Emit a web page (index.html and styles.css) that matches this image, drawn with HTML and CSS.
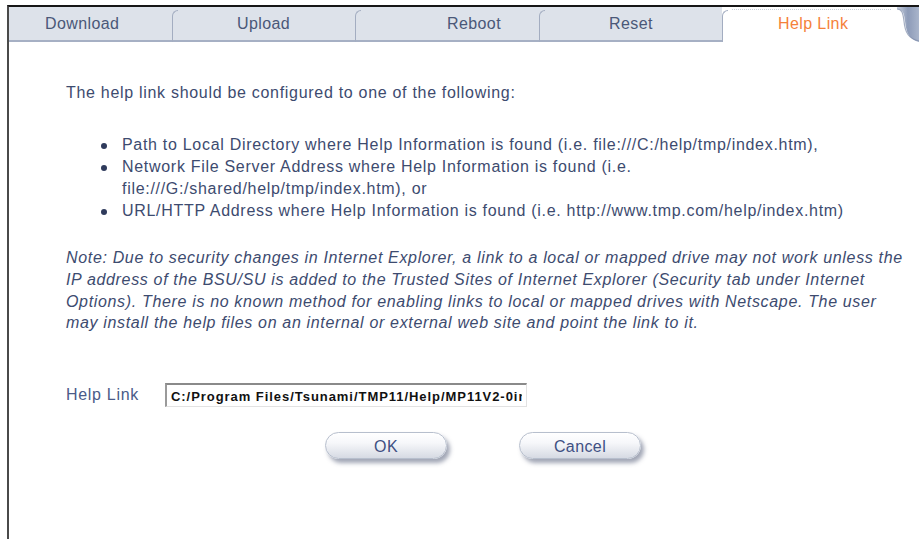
FILE: index.html
```html
<!DOCTYPE html>
<html lang="en">
<head>
<meta charset="utf-8">
<title>Help Link</title>
<link rel="stylesheet" href="styles.css">
</head>
<body>
<div class="frame">
  <nav class="tabs">
    <a class="tab tab--download">Download</a>
    <a class="tab tab--upload">Upload</a>
    <a class="tab tab--reboot">Reboot</a>
    <a class="tab tab--reset">Reset</a>
    <a class="tab tab--help is-active">Help Link</a>
    <span class="tabs__curl">
      <svg width="22" height="35" viewBox="0 0 22 35">
        <defs>
          <linearGradient id="curlFill" x1="0" y1="0" x2="1" y2="0">
            <stop offset="0" stop-color="#c9d1df"/>
            <stop offset="0.5" stop-color="#8d9bb8"/>
            <stop offset="1" stop-color="#a9b5cb"/>
          </linearGradient>
        </defs>
        <path d="M0 2 C6 2 7 6 8 14 C9 26 13 33 22 35 L22 0 L0 0 Z" fill="url(#curlFill)"/>
        <path d="M0 2 C5 2 6 6 7 14 C8 26 12 32 22 34" fill="none" stroke="#7c8aa8" stroke-width="1.2" opacity="0.7"/>
      </svg>
    </span>
  </nav>

  <main class="content">
    <p class="intro">The help link should be configured to one of the following:</p>
    <ul class="options">
      <li>Path to Local Directory where Help Information is found (i.e. file:///C:/help/tmp/index.htm),</li>
      <li>Network File Server Address where Help Information is found (i.e.<br>file:///G:/shared/help/tmp/index.htm), or</li>
      <li>URL/HTTP Address where Help Information is found (i.e. http://www.tmp.com/help/index.htm)</li>
    </ul>
    <p class="note">Note: Due to security changes in Internet Explorer, a link to a local or mapped drive may not work unless the<br>IP address of the BSU/SU is added to the Trusted Sites of Internet Explorer (Security tab under Internet<br>Options). There is no known method for enabling links to local or mapped drives with Netscape. The user<br>may install the help files on an internal or external web site and point the link to it.</p>

    <form class="form">
      <div class="field">
        <label class="field__label" for="helpLink">Help Link</label>
        <input class="field__input" id="helpLink" type="text" value="C:/Program Files/Tsunami/TMP11/Help/MP11V2-0index.htm">
      </div>
      <div class="actions">
        <button type="button" class="pill">OK</button>
        <button type="button" class="pill">Cancel</button>
      </div>
    </form>
  </main>
</div>
</body>
</html>
```

FILE: styles.css
```css
html, body {
  margin: 0;
  padding: 0;
  background: #ffffff;
}

body {
  font-family: "Liberation Sans", Arial, sans-serif;
  color: #3d4b6f;
}

.frame {
  margin: 5px 0 0 7px;
  border-top: 2px solid #161616;
  border-left: 2px solid #4a4a4a;
  height: 534px;
  box-sizing: border-box;
}

/* tab strip */
.tabs {
  display: flex;
  height: 35px;
}

.tab {
  position: relative;
  box-sizing: border-box;
  height: 35px;
  background: #dde2ea;
  border-bottom: 2px solid #a6b0c4;
  font-size: 16px;
  letter-spacing: 0.4px;
  line-height: 33px;
  color: #4a5878;
  white-space: nowrap;
}

/* curved divider at the left of each tab */
.tab + .tab::before {
  content: "";
  position: absolute;
  left: 0;
  top: 3px;
  bottom: -2px;
  width: 5px;
  border-left: 1px solid #a3adc1;
  border-top: 1px solid #a3adc1;
  border-top-left-radius: 7px;
}

.tab--download { width: 163px; padding-left: 36px; }
.tab--upload   { width: 183px; padding-left: 65px; }
.tab--reboot   { width: 184px; padding-left: 92px; }
.tab--reset    { width: 183px; padding-left: 70px; }
.tab--help     { width: 175px; padding-left: 56px; }

.tab.is-active {
  background: #ffffff;
  border-bottom-color: #ffffff;
  color: #f5813a;
}

.tab.is-active::after {
  content: "";
  position: absolute;
  left: 10px;
  right: 6px;
  top: 2px;
  border-top: 1px dotted #c9cfda;
}

.tabs__curl {
  width: 22px;
  height: 35px;
  display: block;
}

.tabs__curl svg {
  display: block;
  filter: blur(0.6px);
}

/* body copy */
.content {
  padding: 40px 0 0 57px;
  font-size: 16px;
  letter-spacing: 0.7px;
  line-height: 22px;
}

.intro {
  margin: 0;
}

.options {
  margin: 30px 0 0 0;
  padding: 0 0 0 56px;
  list-style: none;
}

.options li {
  position: relative;
}

.options li::before {
  content: "";
  position: absolute;
  left: -21px;
  top: 9px;
  width: 6px;
  height: 6px;
  border-radius: 50%;
  background: #2f3b5c;
}

.note {
  margin: 25px 0 0 0;
  font-style: italic;
  line-height: 21.8px;
  white-space: nowrap;
  letter-spacing: 0.66px;
}

/* form */
.form {
  margin: 49px 0 0 0;
}

.field {
  display: flex;
  align-items: center;
  height: 24px;
}

.field__label {
  width: 99px;
  color: #4a5b88;
  font-size: 16px;
  letter-spacing: 0.7px;
}

.field__input {
  box-sizing: border-box;
  width: 362px;
  height: 24px;
  margin: 0;
  padding: 1px 4px 0;
  border-style: solid;
  border-width: 2px 1px 1px 2px;
  border-color: #8a8a8a #e2e2e2 #e2e2e2 #9a9a9a;
  font-family: "Liberation Sans", Arial, sans-serif;
  font-weight: bold;
  font-size: 13px;
  letter-spacing: 0.95px;
  color: #111111;
  background: #ffffff;
  outline: none;
}

.actions {
  display: flex;
  gap: 72px;
  margin-top: 25px;
  padding-left: 259px;
}

.pill {
  width: 122px;
  height: 27px;
  border-radius: 14px;
  border: 1px solid #b7bfcd;
  background: linear-gradient(#ffffff 0%, #f6f7fa 40%, #d6dae3 100%);
  box-shadow: 3px 4px 4px rgba(70, 80, 110, 0.5);
  font-family: "Liberation Sans", Arial, sans-serif;
  font-size: 16px;
  letter-spacing: 0.4px;
  color: #3f5083;
  padding: 3px 0 0 0;
  cursor: pointer;
}
```
